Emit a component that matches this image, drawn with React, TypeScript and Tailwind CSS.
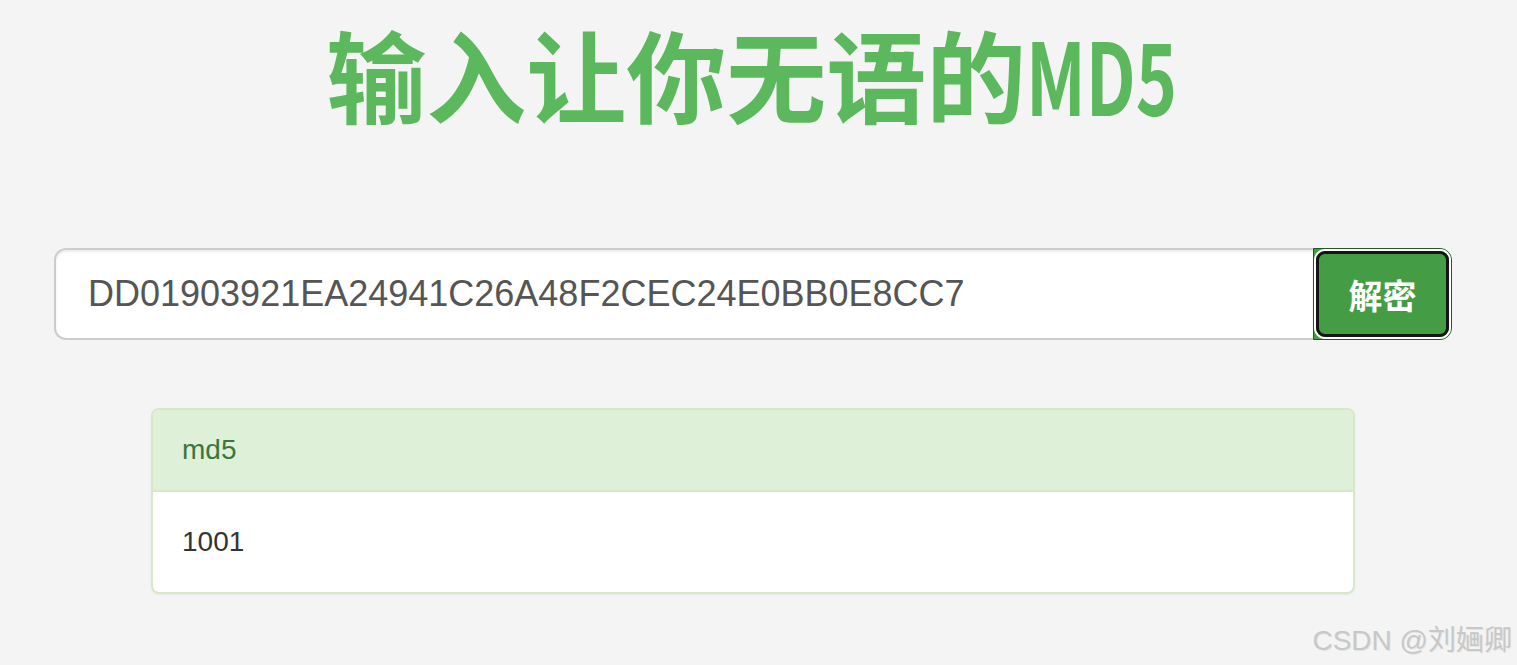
import { useState } from "react";

const FONT = "font-['Liberation_Sans','Noto_Sans_CJK_SC',sans-serif]";

export default function App() {
  const [hash, setHash] = useState("DD01903921EA24941C26A48F2CEC24E0BB0E8CC7");

  return (
    <div className={`relative min-h-[665px] w-full overflow-hidden bg-[#f4f4f4] ${FONT}`}>
      <div className="ml-[54px] w-[1398px]">
        <h1 className="text-center text-[100px] leading-[145px] font-bold whitespace-nowrap text-[#5cb85c] font-['Noto_Sans_CJK_SC',sans-serif]">
          输入让你无语的
          <span className="-mr-[62px] inline-block origin-left scale-x-[0.7]">MD5</span>
        </h1>

        {/* input group */}
        <div className="mt-[103px] flex h-[92px]">
          <input
            value={hash}
            onChange={(e) => setHash(e.target.value)}
            className="h-full flex-1 rounded-l-[12px] border-2 border-r-0 border-[#ccc] bg-white px-[32px] text-[36px] text-[#555] shadow-[inset_0_2px_2px_rgba(0,0,0,0.075)] outline-none"
          />
          <button className="flex h-full w-[139px] rounded-r-[12px] border border-[#255625] bg-[#449d44] p-[2px]">
            <span className="flex h-full w-full items-center justify-center rounded-[9px] border-[3px] border-[#151515] shadow-[0_0_0_2px_#fff] text-[34px] font-bold text-white font-['Noto_Sans_CJK_SC',sans-serif]">
              解密
            </span>
          </button>
        </div>

        {/* result panel */}
        <div className="mt-[68px] ml-[97px] w-[1204px] overflow-hidden rounded-[8px] border-2 border-[#d6e9c6] bg-white shadow-[0_1px_2px_rgba(0,0,0,0.05)]">
          <div className="border-b-2 border-[#d6e9c6] bg-[#dff0d8] px-[29px] py-[20px] text-[28px] leading-[40px] text-[#3c763d]">
            md5
          </div>
          <div className="px-[29px] pt-[30px] pb-[30px] text-[28px] leading-[40px] text-[#333]">1001</div>
        </div>
      </div>

      <div className="absolute right-[5px] bottom-[8px] text-[28px] leading-[32px] text-[#c8c8c8] [text-shadow:1px_1px_0_rgba(0,0,0,0.08)]">
        CSDN @刘婳卿
      </div>
    </div>
  );
}
